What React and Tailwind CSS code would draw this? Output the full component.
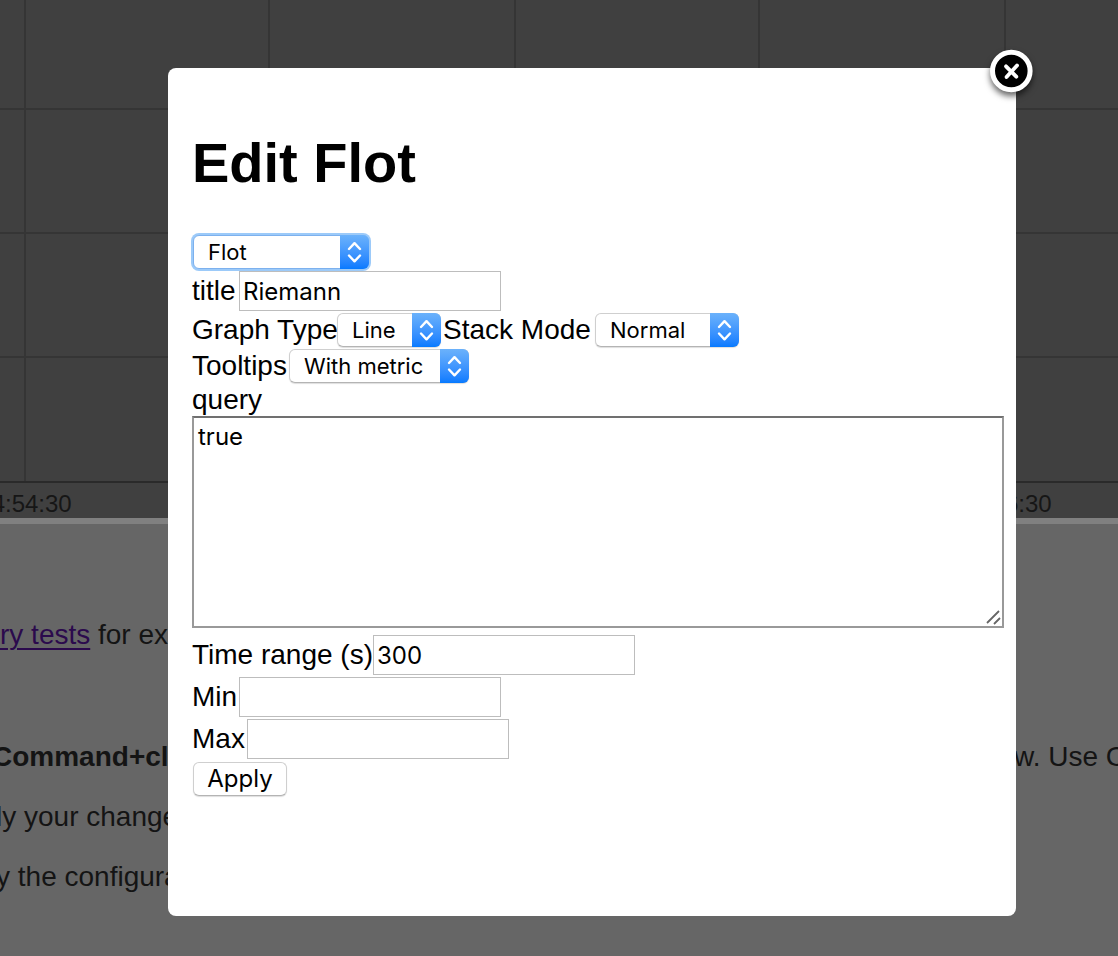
import React from "react";

const controlFont = "font-['Inter',sans-serif] leading-7 text-black";

function SelectBox({ id, label, options, width, focused }) {
  return (
    <span className={`relative inline-flex h-[34px] ${width}`}>
      <select
        id={id}
        aria-label={label}
        className={`h-full w-full appearance-none rounded-md bg-white pl-3.5 pr-8 text-[22px] ${controlFont} ${
          focused
            ? "border border-[#7db1ee] shadow-[0_0_0_2px_#9ccaf9] outline-none"
            : "border border-[#cfcfcf] border-b-[#b4b4b4] shadow-[0_1px_1px_#00000022]"
        }`}
      >
        {options.map((option) => (
          <option key={option}>{option}</option>
        ))}
      </select>
      <span className="pointer-events-none absolute inset-y-0 right-0 flex w-[29px] items-center justify-center rounded-r-md bg-linear-to-b from-[#6bb2fb] to-[#057aff]">
        <svg width="16" height="22" viewBox="0 0 16 22" fill="none" stroke="white" strokeWidth="2.4" strokeLinecap="round" strokeLinejoin="round">
          <path d="M2 8 7.500 2.200 13 8M2 14.500 7.500 20.300 13 14.500" />
        </svg>
      </span>
    </span>
  );
}

function TextField({ id, label, value = "", labelWidth }) {
  return (
    <div className="flex h-[42px] items-center">
      <label htmlFor={id} className={`whitespace-nowrap ${labelWidth}`}>{label}</label>
      <input
        id={id}
        type="text"
        defaultValue={value}
        className={`h-10 w-[262px] border border-[#bdbdbd] bg-white px-[3px] text-2xl outline-none ${controlFont}`}
      />
    </div>
  );
}

function Chart() {
  const columns = [25, 269, 515, 759, 1005];
  const rows = [109, 233, 357];
  return (
    <svg className="block h-[518px] w-full bg-[#404040]" role="img" aria-label="Riemann graph">
      {columns.map((x) => (
        <line key={x} x1={x} x2={x} y1="0" y2="481" stroke="#353535" strokeWidth="2" />
      ))}
      {rows.map((y) => (
        <line key={y} x1="0" x2="100%" y1={y} y2={y} stroke="#353535" strokeWidth="2" />
      ))}
      <line x1="0" x2="100%" y1="482" y2="482" stroke="#2a2a2a" strokeWidth="2" />
      <g fill="#161616" fontSize="24" textAnchor="middle">
        <text x="25" y="512">14:54:30</text>
        <text x="1005" y="512">14:56:30</text>
      </g>
    </svg>
  );
}

function Help() {
  return (
    <div className="whitespace-nowrap pt-[95px] text-[28px] leading-8 text-[#141414]">
      <p className="mb-[90px]">
        <a href="#tests" className="text-[#2b0a4d] underline decoration-2 underline-offset-4">ry tests</a> for exa
      </p>
      <p className="-mx-2 mb-7 flex justify-between">
        <b>Command+clic</b>
        <span>w. Use C</span>
      </p>
      <div className="-ml-1">
        <p className="mb-7">ly your change</p>
        <p>y the configura</p>
      </div>
    </div>
  );
}

function CloseButton() {
  return (
    <button type="button" aria-label="Close" className="absolute -right-5 -top-5 size-[50px]">
      <svg width="50" height="50" viewBox="0 0 50 50" className="drop-shadow-[0_4px_3px_#00000099]">
        <circle cx="25.300" cy="23" r="18.800" fill="#000" stroke="#fff" strokeWidth="5" />
        <path d="M20 18.300 30.300 28.700M31 17.500 20.500 29" stroke="#fff" strokeWidth="3.800" strokeLinecap="round" />
      </svg>
    </button>
  );
}

function EditDialog() {
  return (
    <div role="dialog" aria-labelledby="dialog-title" className="relative min-h-[848px] w-full rounded-lg bg-white px-6 pt-[63px] text-black">
      <CloseButton />
      <h1 id="dialog-title" className="mb-[38px] text-[56px] font-bold leading-[64px]">Edit Flot</h1>
      <form className="text-[28px] leading-8" onSubmit={(event) => event.preventDefault()}>
        <div className="flex h-[37px] items-center px-px">
          <SelectBox id="view" label="View" options={["Flot"]} width="w-[176px]" focused />
        </div>
        <TextField id="title" label="title" value="Riemann" labelWidth="w-[47px]" />
        <div className="flex h-9 items-center">
          <label htmlFor="graph-type" className="w-[145px] whitespace-nowrap">Graph Type</label>
          <SelectBox id="graph-type" options={["Line"]} width="w-[104px]" />
          <label htmlFor="stack-mode" className="w-[154px] whitespace-nowrap pl-0.5">Stack Mode</label>
          <SelectBox id="stack-mode" options={["Normal"]} width="w-[144px]" />
        </div>
        <div className="flex h-9 items-center">
          <label htmlFor="tooltips" className="w-[97px] whitespace-nowrap">Tooltips</label>
          <SelectBox id="tooltips" options={["With metric"]} width="w-[180px]" />
        </div>
        <label htmlFor="query" className="block">query</label>
        <div className="relative -mr-3 mb-1.5">
          <textarea
            id="query"
            defaultValue="true"
            className={`block h-[212px] w-full resize-none border-2 border-[#999] border-t-[#707070] bg-white px-1 py-[5px] text-2xl outline-none ${controlFont}`}
          />
          <svg className="pointer-events-none absolute bottom-0.5 right-0.5" width="18" height="18" viewBox="0 0 18 18" stroke="#666" strokeWidth="1.800">
            <path d="M3 15 15 3M10 16 16 10" />
          </svg>
        </div>
        <TextField id="time-range" label="Time range (s)" value="300" labelWidth="w-[181px]" />
        <TextField id="min" label="Min" labelWidth="w-[47px]" />
        <TextField id="max" label="Max" labelWidth="w-[55px]" />
        <button
          type="submit"
          className={`ml-px mt-0.5 block h-[34px] w-[94px] rounded-md border border-[#cfcfcf] border-b-[#b4b4b4] bg-white text-2xl shadow-[0_1px_1px_#00000022] ${controlFont}`}
        >
          Apply
        </button>
      </form>
    </div>
  );
}

export default function App() {
  return (
    <div className="relative min-h-screen overflow-hidden bg-[#666] font-['Liberation_Sans',Arial,sans-serif]">
      <main>
        <Chart />
        <div className="h-1.5 bg-[#808080]" />
        <Help />
      </main>
      <div className="absolute inset-0 pl-[168px] pr-[102px] pt-[68px]">
        <EditDialog />
      </div>
    </div>
  );
}
